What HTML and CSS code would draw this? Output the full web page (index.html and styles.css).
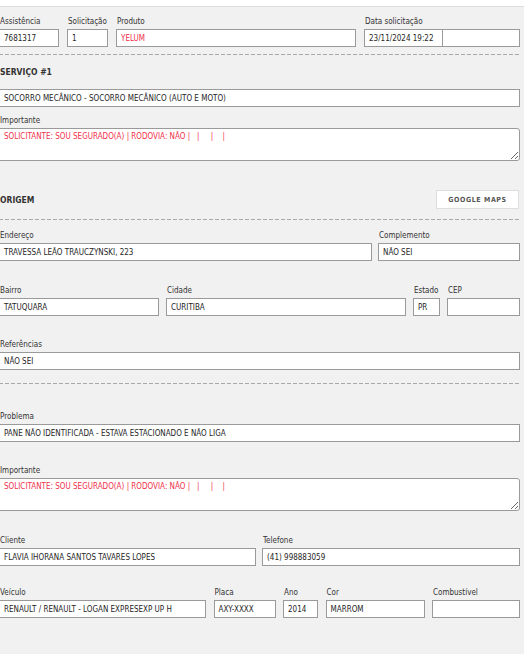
FILE: index.html
```html
<!DOCTYPE html>
<html lang="pt-BR">
<head>
<meta charset="utf-8">
<title>Serviço</title>
<link rel="stylesheet" href="styles.css">
</head>
<body>
<div class="topbar"></div>
<div class="form">
  <div class="row row-1">
    <div class="field"><span class="lbl">Assistência</span><div class="inp">7681317</div></div>
    <div class="field"><span class="lbl">Solicitação</span><div class="inp">1</div></div>
    <div class="field"><span class="lbl">Produto</span><div class="inp red">YELUM</div></div>
    <div class="field"><span class="lbl">Data solicitação</span>
      <div class="pair"><div class="inp first">23/11/2024 19:22</div><div class="inp second"></div></div>
    </div>
  </div>
  <div class="dash d1"></div>
  <h2 class="heading h-servico">SERVIÇO #1</h2>
  <div class="inp m-11">SOCORRO MECÂNICO - SOCORRO MECÂNICO (AUTO E MOTO)</div>
  <div class="field m-9"><span class="lbl">Importante</span><textarea class="area">SOLICITANTE: SOU SEGURADO(A) | RODOVIA: NÃO |   |     |    |</textarea></div>
  <div class="origem">
    <h2 class="heading">ORIGEM</h2>
    <button class="btn">GOOGLE MAPS</button>
  </div>
  <div class="dash d2"></div>
  <div class="row row-end m-11">
    <div class="field"><span class="lbl">Endereço</span><div class="inp">TRAVESSA LEÃO TRAUCZYNSKI, 223</div></div>
    <div class="field"><span class="lbl">Complemento</span><div class="inp">NÃO SEI</div></div>
  </div>
  <div class="row row-bairro m-25">
    <div class="field"><span class="lbl">Bairro</span><div class="inp">TATUQUARA</div></div>
    <div class="field"><span class="lbl">Cidade</span><div class="inp">CURITIBA</div></div>
    <div class="field"><span class="lbl">Estado</span><div class="inp">PR</div></div>
    <div class="field"><span class="lbl">CEP</span><div class="inp"></div></div>
  </div>
  <div class="field m-24"><span class="lbl">Referências</span><div class="inp">NÃO SEI</div></div>
  <div class="dash d3"></div>
  <div class="field m-28"><span class="lbl">Problema</span><div class="inp">PANE NÃO IDENTIFICADA - ESTAVA ESTACIONADO E NÃO LIGA</div></div>
  <div class="field m-24"><span class="lbl">Importante</span><textarea class="area">SOLICITANTE: SOU SEGURADO(A) | RODOVIA: NÃO |   |     |    |</textarea></div>
  <div class="row row-cliente m-25">
    <div class="field"><span class="lbl">Cliente</span><div class="inp">FLAVIA IHORANA SANTOS TAVARES LOPES</div></div>
    <div class="field"><span class="lbl">Telefone</span><div class="inp">(41) 998883059</div></div>
  </div>
  <div class="row row-veiculo m-22">
    <div class="field"><span class="lbl">Veículo</span><div class="inp">RENAULT / RENAULT - LOGAN EXPRESEXP UP H</div></div>
    <div class="field"><span class="lbl">Placa</span><div class="inp">AXY-XXXX</div></div>
    <div class="field"><span class="lbl">Ano</span><div class="inp">2014</div></div>
    <div class="field"><span class="lbl">Cor</span><div class="inp">MARROM</div></div>
    <div class="field"><span class="lbl">Combustível</span><div class="inp"></div></div>
  </div>
</div>
</body>
</html>
```
FILE: styles.css
```css
* { box-sizing: border-box; }
html, body { margin: 0; padding: 0; }
body {
  background: #f1f1f1;
  font-family: "DejaVu Sans Condensed", "DejaVu Sans", sans-serif;
  font-size: 8px;
  color: #333;
  overflow: hidden;
  height: 654px;
}
.topbar {
  height: 7px;
  background: #fff;
  border-bottom: 1px solid #dcdcdc;
}
.form {
  width: 521px;
  margin-left: -1px;
  padding-top: 10px;
}
.row { display: grid; }
.row-1 { grid-template-columns: 60px 41px 240px 1fr; column-gap: 8px; }
.row-end { grid-template-columns: 373px 1fr; column-gap: 6px; }
.row-bairro { grid-template-columns: 160px 240px 27px 1fr; column-gap: 7px; }
.row-cliente { grid-template-columns: 257px 1fr; column-gap: 6px; }
.row-veiculo { grid-template-columns: 207px 62px 35px 99px 1fr; column-gap: 7.5px; }
.field { display: flex; flex-direction: column; min-width: 0; }
.lbl {
  display: block;
  height: 12px;
  line-height: 10px;
  padding-left: 1px;
  color: #333;
  white-space: nowrap;
}
.inp {
  display: block;
  width: 100%;
  height: 18px;
  margin: 0;
  border: 1px solid #9a9a9a;
  background: #fff;
  padding: 1px 4px 0;
  line-height: 16px;
  color: #262626;
  white-space: nowrap;
  overflow: hidden;
}
.red { color: #f0304a; }
.pair { display: flex; }
.pair .first { flex: 0 0 79px; }
.pair .second { flex: 1 1 0; min-width: 0; margin-left: -1px; }
.dash {
  height: 1px;
  background: repeating-linear-gradient(to right, #a9a9a9 0 4px, transparent 4px 6px);
}
.d1 { margin-top: 7px; }
.d2 { margin-top: 10px; }
.d3 { margin-top: 13px; }
.heading {
  margin: 0;
  font-size: 8.5px;
  font-weight: bold;
  line-height: 12px;
  color: #333;
  padding-left: 1px;
}
.h-servico { margin-top: 11px; }
.m-9 { margin-top: 9px; }
.m-11 { margin-top: 11px; }
.m-22 { margin-top: 22px; }
.m-24 { margin-top: 24px; }
.m-25 { margin-top: 25px; }
.m-28 { margin-top: 28px; }
.area {
  display: block;
  width: 100%;
  height: 33px;
  margin: 0;
  border: 1px solid #9a9a9a;
  border-radius: 0 3px 3px 0;
  background: #fff;
  padding: 2px 4px;
  font: inherit;
  line-height: 11px;
  color: #f0304a;
  resize: both;
  outline: none;
}
.origem {
  margin-top: 29px;
  display: flex;
  justify-content: space-between;
  align-items: center;
  height: 19px;
}
.btn {
  width: 83px;
  height: 19px;
  margin: 0 1px 0 0;
  padding: 0;
  background: #fff;
  border: 1px solid #dedede;
  font-family: inherit;
  font-size: 7px;
  font-weight: bold;
  letter-spacing: 0.6px;
  color: #555;
}
```
